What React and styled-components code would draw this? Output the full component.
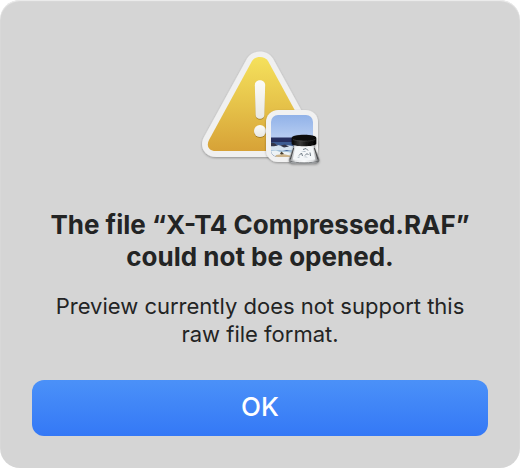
import React from 'react';
import styled, { createGlobalStyle } from 'styled-components';

const GlobalStyle = createGlobalStyle`
    * {
        box-sizing: border-box;
    }

    body {
        margin: 0;
        background: #ffffff;
        font-family: Inter, 'Liberation Sans', sans-serif;
        color: #232424;
    }
`;

const Dialog = styled.main`
    display: flex;
    flex-direction: column;
    align-items: center;
    width: 100%;
    padding: 40px 32px 32px;
    border-radius: 20px;
    background: #d5d5d5;
    box-shadow: inset 0 1px 1px #eeeeee;
    text-align: center;
`;

const AlertIcon = styled.svg`
    display: block;
    width: 128px;
    height: 128px;
`;

const Title = styled.h1`
    max-width: 448px;
    margin: 41px 0 19px;
    font-size: 26px;
    font-weight: 700;
    line-height: 32px;
`;

const Message = styled.p`
    max-width: 448px;
    margin: 0 0 32px;
    font-size: 22px;
    line-height: 28px;
`;

const Button = styled.button`
    width: 100%;
    height: 56px;
    padding: 0 0 4px;
    border: none;
    border-radius: 12px;
    background: linear-gradient(#4b91f8, #3478f6);
    color: #ffffff;
    font-family: inherit;
    font-size: 26px;
    font-weight: 500;
    cursor: pointer;

    &:active {
        background: #2f6de0;
    }
`;

const WarningIcon = () => (
    <AlertIcon viewBox="0 0 128 128" aria-hidden="true">
        <defs>
            <linearGradient id="yellow" x1="0" y1="0" x2="0" y2="1">
                <stop offset="0" stopColor="#f5e15c" />
                <stop offset="0.5" stopColor="#e6c34a" />
                <stop offset="1" stopColor="#d7a237" />
            </linearGradient>
            <linearGradient id="mark" x1="0" y1="0" x2="0" y2="1">
                <stop offset="0" stopColor="#fbfbf8" />
                <stop offset="1" stopColor="#e9e8e2" />
            </linearGradient>
            <linearGradient id="sky" x1="0" y1="0" x2="0" y2="1">
                <stop offset="0" stopColor="#91b2e8" />
                <stop offset="1" stopColor="#b7cdf2" />
            </linearGradient>
            <linearGradient id="cap" x1="0" y1="0" x2="1" y2="0">
                <stop offset="0" stopColor="#050505" />
                <stop offset="0.35" stopColor="#3a3a3a" />
                <stop offset="0.6" stopColor="#161616" />
                <stop offset="1" stopColor="#000000" />
            </linearGradient>
            <linearGradient id="glass" x1="0" y1="0" x2="1" y2="0">
                <stop offset="0" stopColor="#85888a" />
                <stop offset="0.2" stopColor="#e4e6e8" />
                <stop offset="0.5" stopColor="#fafbfc" />
                <stop offset="0.8" stopColor="#dcdee0" />
                <stop offset="1" stopColor="#6b6c6e" />
            </linearGradient>
            <filter id="shadow" x="-20%" y="-20%" width="140%" height="140%">
                <feDropShadow dx="0" dy="1" stdDeviation="1" floodOpacity="0.32" />
            </filter>
            <filter id="markShadow" x="-40%" y="-20%" width="180%" height="150%">
                <feDropShadow dx="0" dy="1" stdDeviation="0.6" floodColor="#80600c" floodOpacity="0.6" />
            </filter>
            <clipPath id="photo">
                <rect x="75" y="75" width="42" height="42" rx="7" />
            </clipPath>
        </defs>

        {/* warning triangle */}
        <path
            filter="url(#shadow)"
            fill="#f0f0f0"
            d="M51 18.5C56.5 9 71.5 9 77 18.5L120 97C125.5 107 119 117 108 117H20C9 117 2.5 107 8 97Z"
        />
        <path
            fill="url(#yellow)"
            d="M56 21C59.5 15.5 68.5 15.5 72 21L115 100C118 106 115 111 108.5 111H19.5C13 111 10 106 13 100Z"
        />
        <g fill="url(#mark)" filter="url(#markShadow)">
            <path d="M58.8 45.3C58.8 38.7 69.2 38.7 69.2 45.3L68.3 75C68.2 80 59.8 80 59.7 75Z" />
            <circle cx="64" cy="91" r="6" />
        </g>

        {/* photo badge */}
        <rect x="70" y="70" width="52" height="52" rx="12" fill="#f1f1f1" filter="url(#shadow)" />
        <g clipPath="url(#photo)">
            <rect x="75" y="75" width="42" height="23" fill="url(#sky)" />
            <rect x="75" y="97.5" width="42" height="20" fill="#262f60" />
            <path fill="#3d5c93" d="M75 102H117V117H75Z" />
            <path
                fill="#d6e3f0"
                d="M75 105L79 104.5L84 105.5L90 105L97 106V111L91 110L86 111L80 110L75 111Z"
            />
            <path fill="#33364a" d="M75 102.5L78 103L82 105.5L78 106.2H75ZM84 105.5L89 104.5L93 106.5L88 107.5Z" />
            <path fill="#a9c6dc" d="M75 110L82 110L90 111L97 110V115H75Z" />
            <path fill="#edf3f6" d="M75 111L80 110.5L84 112L91 112L97 113V117H75Z" />
            <path fill="#cdb58c" d="M80 115L87 114L94 115.5V117H79Z" />
            <path fill="#4a4030" d="M84 113.5L85.5 111.5L87 113L88 114L85 114.5Z" />
        </g>

        {/* loupe */}
        <g filter="url(#shadow)">
            <path
                fill="url(#glass)"
                stroke="#77797a"
                strokeWidth="0.5"
                d="M98 104.5H118L119 109L123 119C124 122.5 121 123.5 118 123.5H98C95 123.5 92.5 122.5 93.3 119L97 109Z"
            />
            <path fill="#f4f7f9" d="M99.5 107H116.5L119.3 119.5C115 120.5 101 120.5 96.8 119.5Z" />
            <path fill="none" stroke="#3a3b3c" strokeWidth="0.9" d="M97.7 108L94.3 119.5M118.3 108L122 119.5" />
            <path
                fill="none"
                stroke="#55585a"
                strokeWidth="0.7"
                d="M94 121C98 123.4 118 123.4 122.4 121"
            />
            <path
                fill="none"
                stroke="#6d7983"
                strokeWidth="1"
                d="M107 109.5L110 108.5L112 110.5M103 115.5L105.5 113L106.5 116M109 115.5L111 113.5L112.5 115M114 112.5L114.5 116"
            />
            <path fill="#a9b6c1" d="M105 112L109 111L110 112ZM101 117L104 116.5L103 118ZM107 117L110 116.5L112 117.5Z" />
            <path
                fill="url(#cap)"
                d="M95.7 98C95.7 93.7 120.3 93.7 120.3 98V103.5C120.3 107.2 95.7 107.2 95.7 103.5Z"
            />
            <ellipse cx="108" cy="97.8" rx="11.6" ry="2.7" fill="#080808" />
            <path fill="none" stroke="#4a4a4a" strokeWidth="0.5" d="M96.5 99C99 102 117 102 119.5 99" />
        </g>
    </AlertIcon>
);

const App = () => {
    return (
        <>
            <GlobalStyle />
            <Dialog role="alertdialog" aria-labelledby="alert-title" aria-describedby="alert-message">
                <WarningIcon />
                <Title id="alert-title">The file “X-T4 Compressed.RAF” could not be opened.</Title>
                <Message id="alert-message">
                    Preview currently does not support this raw file format.
                </Message>
                <Button type="button">OK</Button>
            </Dialog>
        </>
    );
};

export default App;
